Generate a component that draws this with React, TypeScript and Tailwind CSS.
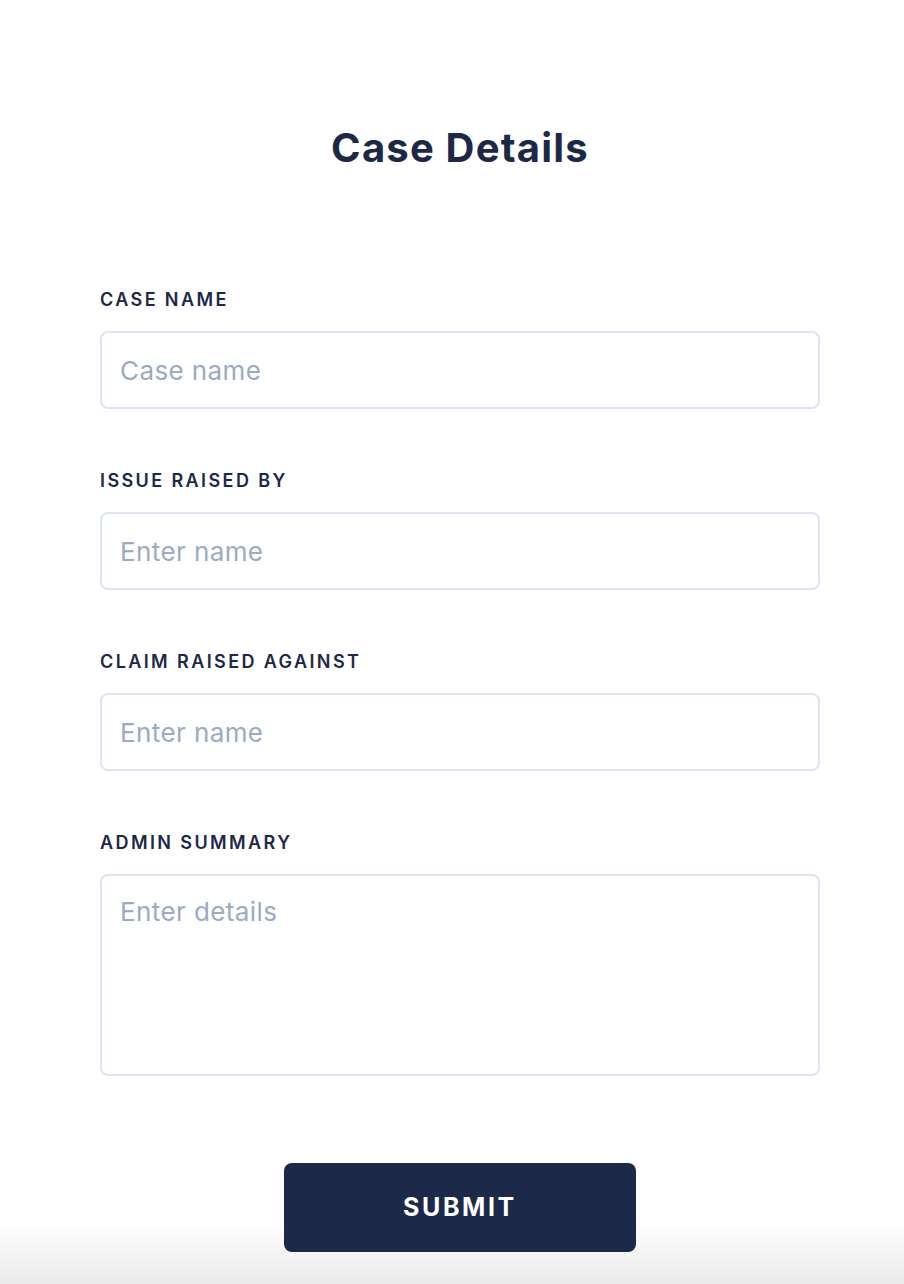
export default function App() {
  const fields = [
    { id: "caseName", label: "Case name", placeholder: "Case name" },
    { id: "raisedBy", label: "Issue raised by", placeholder: "Enter name" },
    { id: "raisedAgainst", label: "Claim raised against", placeholder: "Enter name" },
  ];

  return (
    <div
      className="min-h-[1284px] w-full pl-4 flex flex-col items-center bg-linear-to-b from-white from-[95%] to-[#ebebeb] text-[#1c2848]"
      style={{ fontFamily: "Inter, 'Noto Sans', sans-serif" }}
    >
      <h1 className="pt-[126px] text-[40px] leading-[44px] font-bold tracking-[1.2px]">Case Details</h1>

      <form className="w-[720px] mt-[119px] flex flex-col" onSubmit={(e) => e.preventDefault()}>
        {fields.map((f) => (
          <div key={f.id} className="flex flex-col mb-[61px]">
            <label
              htmlFor={f.id}
              className="text-[18px] leading-[22px] font-semibold uppercase tracking-[2.4px] mb-[20px]"
            >
              {f.label}
            </label>
            <input
              id={f.id}
              placeholder={f.placeholder}
              className="h-[78px] w-full border-2 border-[#dde4f1] rounded-lg px-[18px] text-[26px] tracking-[0.4px] outline-none placeholder:text-[#9aabc3]"
            />
          </div>
        ))}

        <div className="flex flex-col">
          <label
            htmlFor="summary"
            className="text-[18px] leading-[22px] font-semibold uppercase tracking-[2.4px] mb-[20px]"
          >
            Admin summary
          </label>
          <textarea
            id="summary"
            placeholder="Enter details"
            className="h-[202px] w-full resize-none border-2 border-[#dde4f1] rounded-lg px-[18px] pt-[21px] text-[26px] leading-[30px] tracking-[0.4px] outline-none placeholder:text-[#9aabc3]"
          />
        </div>

        <div className="flex justify-center mt-[87px]">
          <button
            type="submit"
            className="w-[352px] h-[89px] rounded-lg bg-[#1d2949] text-white text-[25px] font-bold uppercase tracking-[2.6px]"
          >
            Submit
          </button>
        </div>
      </form>
    </div>
  );
}
